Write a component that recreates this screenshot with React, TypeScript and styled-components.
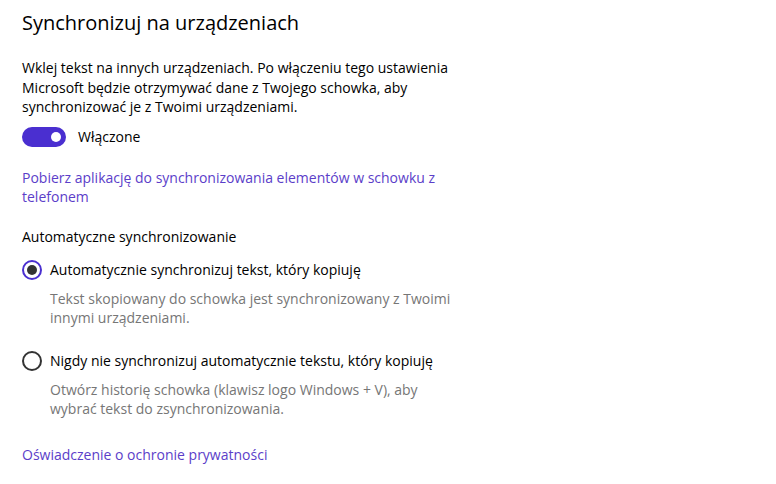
import React from "react";
import styled, { createGlobalStyle } from "styled-components";

const Global = createGlobalStyle`
  html, body { margin: 0; padding: 0; background: #ffffff; }
  body { font-family: "Open Sans", "Noto Sans", Arial, sans-serif; color: #000; }
`;

const Page = styled.div`
  width: 776px;
  height: 484px;
  box-sizing: border-box;
  padding: 9px 22px 0 22px;
  display: flex;
  flex-direction: column;
  background: #fff;
`;

const Title = styled.h1`
  margin: 0;
  font-size: 20px;
  font-weight: 400;
  line-height: 28px;
  color: #000;
`;

const Text = styled.p<{ $mt?: number }>`
  margin: ${(p) => p.$mt ?? 0}px 0 0 0;
  font-size: 14px;
  line-height: 19.5px;
  color: #000;
  width: 440px;
`;

const ToggleRow = styled.div`
  display: flex;
  align-items: center;
  gap: 12px;
  margin-top: 10px;
  height: 20px;
`;

const Track = styled.div`
  width: 44px;
  height: 20px;
  border-radius: 10px;
  background: #4a2fd0;
  display: flex;
  align-items: center;
  justify-content: flex-end;
  padding-right: 5px;
  box-sizing: border-box;
`;

const Knob = styled.div`
  width: 10px;
  height: 10px;
  border-radius: 50%;
  background: #fff;
`;

const Label = styled.span`
  font-size: 14px;
  color: #000;
`;

const Link = styled.a<{ $mt: number }>`
  display: block;
  margin-top: ${(p) => p.$mt}px;
  font-size: 14px;
  line-height: 19.5px;
  color: #5b3ec9;
  text-decoration: none;
  width: 440px;
`;

const SectionHead = styled.div`
  margin-top: 20px;
  font-size: 14px;
  line-height: 20px;
  color: #000;
`;

const RadioRow = styled.div<{ $mt: number }>`
  display: flex;
  align-items: center;
  gap: 8px;
  margin-top: ${(p) => p.$mt}px;
  height: 20px;
`;

const RadioCircle = styled.div<{ $on?: boolean }>`
  width: 20px;
  height: 20px;
  box-sizing: border-box;
  border-radius: 50%;
  border: 2px solid ${(p) => (p.$on ? "#4a2fd0" : "#333")};
  display: flex;
  align-items: center;
  justify-content: center;
  flex: none;
`;

const Dot = styled.div`
  width: 10px;
  height: 10px;
  border-radius: 50%;
  background: #333;
`;

const Desc = styled.div`
  margin-left: 28px;
  margin-top: 9px;
  font-size: 14px;
  line-height: 19.5px;
  color: #767676;
  width: 410px;
`;

export default function App() {
  return (
    <>
      <Global />
      <Page>
        <Title>Synchronizuj na urządzeniach</Title>
        <Text $mt={21}>
          Wklej tekst na innych urządzeniach. Po włączeniu tego ustawienia Microsoft będzie
          otrzymywać dane z Twojego schowka, aby synchronizować je z Twoimi urządzeniami.
        </Text>
        <ToggleRow>
          <Track>
            <Knob />
          </Track>
          <Label>Włączone</Label>
        </ToggleRow>
        <Link $mt={21}>
          Pobierz aplikację do synchronizowania elementów w schowku z telefonem
        </Link>
        <SectionHead>Automatyczne synchronizowanie</SectionHead>
        <RadioRow $mt={13}>
          <RadioCircle $on>
            <Dot />
          </RadioCircle>
          <Label>Automatycznie synchronizuj tekst, który kopiuję</Label>
        </RadioRow>
        <Desc>
          Tekst skopiowany do schowka jest synchronizowany z Twoimi innymi urządzeniami.
        </Desc>
        <RadioRow $mt={23}>
          <RadioCircle />
          <Label>Nigdy nie synchronizuj automatycznie tekstu, który kopiuję</Label>
        </RadioRow>
        <Desc>
          Otwórz historię schowka (klawisz logo Windows + V), aby wybrać tekst do
          zsynchronizowania.
        </Desc>
        <Link $mt={26}>Oświadczenie o ochronie prywatności</Link>
      </Page>
    </>
  );
}
